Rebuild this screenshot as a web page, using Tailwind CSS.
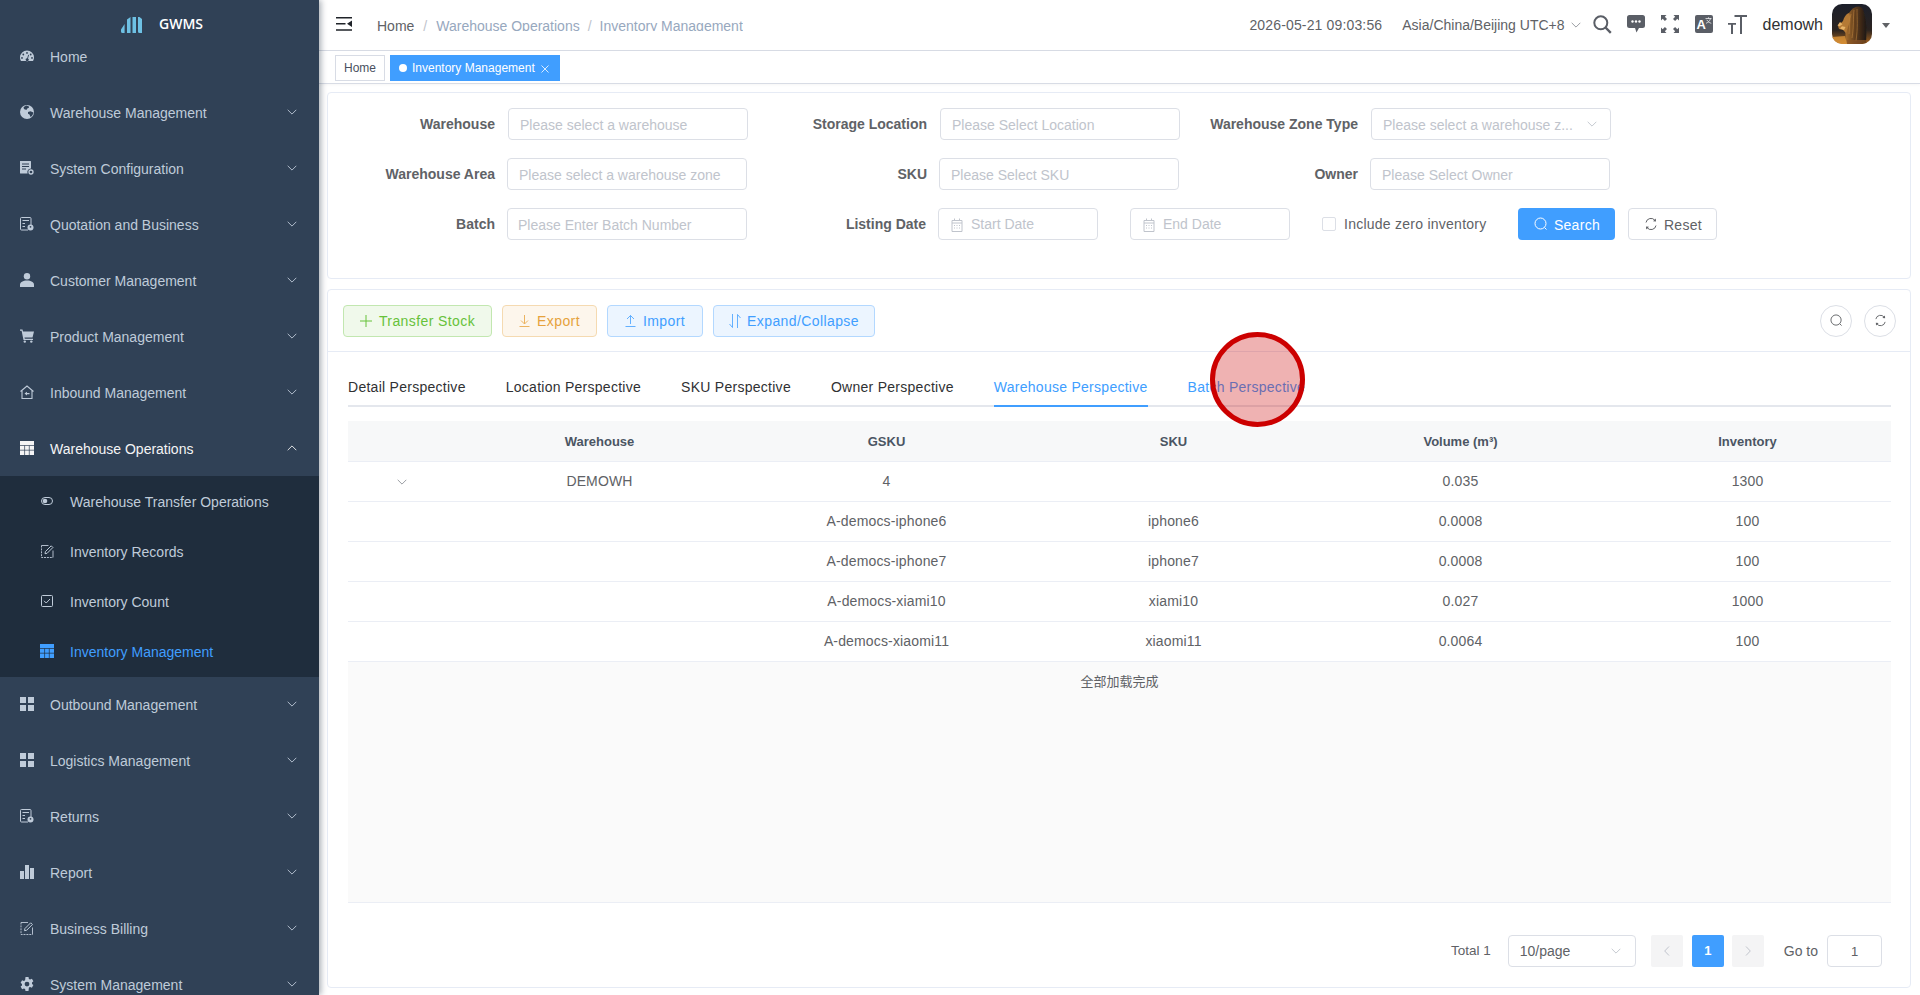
<!DOCTYPE html>
<html lang="en">
<head>
    <meta charset="UTF-8">
    <meta name="viewport" content="width=device-width, initial-scale=1.0">
    <title>GWMS - Inventory Management</title>
    <script src="https://cdn.jsdelivr.net/npm/@tailwindcss/browser@4"></script>
</head>
<body class="font-['Liberation_Sans','Noto_Sans_CJK_SC',sans-serif] bg-white">
    <!-- shared icons -->
    <svg class="hidden">
        <symbol id="i-dash" viewBox="0 0 14 14"><path fill="currentColor" fill-rule="evenodd" d="M7 1.500A7 7 0 0 0 0 8.300c0 1.700.5 3 1 3.700h12c.5-.7 1-2 1-3.700a7 7 0 0 0-7-6.800zM7 3a.9.9 0 1 1 0 1.800A.9.9 0 0 1 7 3zM3.300 4.600a.9.9 0 1 1 0 1.800.9.9 0 0 1 0-1.800zM10.700 4.600a.9.9 0 1 1 0 1.800.9.9 0 0 1 0-1.800zM2 8a.9.9 0 1 1 0 1.800A.9.9 0 0 1 2 8zM12 8a.9.9 0 1 1 0 1.800A.9.9 0 0 1 12 8zM8.200 5.800l.8.3-1 3.300a1.500 1.500 0 1 1-.8-.2z"/></symbol>
        <symbol id="i-globe" viewBox="0 0 14 14"><circle cx="7" cy="7" r="7" fill="currentColor"/><path fill="#304156" d="M6.500.6C5 1 3.800 1.900 3.500 3l1.200 1.500 2 .2.800-1.500 1.500-.5-.3-1.500zM8 7l2.500-.8 2.900 1.300c-.2 1.800-1.200 3.400-2.900 4.600L9.500 9.500 8 8.800z"/></symbol>
        <symbol id="i-config" viewBox="0 0 14 14"><path fill="currentColor" d="M0 0h10.500a.5.5 0 0 1 .5.5V7.500a3.600 3.600 0 0 0-3.400 5H.5a.5.5 0 0 1-.5-.5z"/><path stroke="#304156" stroke-width="1" d="M2 3h7M2 5.500h7M2 8h4"/><circle cx="11" cy="11" r="2" fill="none" stroke="currentColor" stroke-width="1.300"/></symbol>
        <symbol id="i-quote" viewBox="0 0 14 14"><path fill="none" stroke="currentColor" d="M8 13H1.500a1 1 0 0 1-1-1V1.500a1 1 0 0 1 1-1h8.500a1 1 0 0 1 1 1V8"/><path stroke="currentColor" d="M2.500 3.500h6.500M2.500 6.500h2.500M2.500 9.500h2.500"/><circle cx="10.500" cy="10.500" r="3" fill="currentColor"/><circle cx="10.500" cy="9.800" r=".9" fill="#304156"/></symbol>
        <symbol id="i-user" viewBox="0 0 14 14"><circle cx="7" cy="3.200" r="3.200" fill="currentColor"/><path fill="currentColor" d="M0 14v-2.500C0 9.300 3 7.500 7 7.500s7 1.800 7 4V14z"/></symbol>
        <symbol id="i-cart" viewBox="0 0 14 14"><path fill="currentColor" d="M0 .5h2.500L3 2.500h11l-1.500 6H4.500l.3 1.300h8.200v1.200H3.500L1.600 1.700H0z"/><circle cx="4.800" cy="12.600" r="1.200" fill="currentColor"/><circle cx="11.300" cy="12.600" r="1.200" fill="currentColor"/></symbol>
        <symbol id="i-inbound" viewBox="0 0 14 14"><path fill="none" stroke="currentColor" stroke-width="1.100" d="M.5 6.500 7 1l6.500 5.500M2 5.500v8h10v-8"/><path fill="currentColor" d="M4.500 8.500 7 6.800v1.200h2.500v1.200H7v1.200z"/></symbol>
        <symbol id="i-table" viewBox="0 0 14 14"><path fill="currentColor" d="M0 0h14v14H0z"/><path stroke="#304156" stroke-width=".7" d="M0 4.500h14M0 9.200h14M4.600 4.500V14M9.300 4.500V14"/></symbol>
        <symbol id="i-table-active" viewBox="0 0 14 14"><path fill="currentColor" d="M0 0h14v14H0z"/><path stroke="#1f2d3d" stroke-width=".7" d="M0 4.500h14M0 9.200h14M4.600 4.500V14M9.300 4.500V14"/></symbol>
        <symbol id="i-grid" viewBox="0 0 14 14"><path fill="currentColor" d="M0 0h6v6H0zM8 0h6v6H8zM0 8h6v6H0zM8 8h6v6H8z"/></symbol>
        <symbol id="i-bars" viewBox="0 0 14 14"><path fill="currentColor" d="M0 6h4v8H0zM5 0h4v14H5zM10 3h4v11h-4z"/></symbol>
        <symbol id="i-edit" viewBox="0 0 13 14"><path fill="none" stroke="currentColor" stroke-width=".9" stroke-dasharray="2 .9" d="M.5 1.500v12h11.500"/><path fill="none" stroke="currentColor" stroke-width=".9" d="M.5 1.500h7M12 6.500v7"/><path fill="none" stroke="currentColor" stroke-width="1" d="m4 9.700.4-2.100L10.200 1.800l1.700 1.700-5.800 5.800z"/></symbol>
        <symbol id="i-gear" viewBox="0 0 14 14"><path fill="currentColor" fill-rule="evenodd" d="M5.500 0h3l.4 1.900 1.200.6 1.800-.8 1.500 2.600-1.400 1.200v1.400l1.400 1.200-1.500 2.600-1.800-.8-1.200.7L8.500 14h-3l-.4-1.900-1.200-.7-1.800.8L.6 9.600 2 8.400V7L.6 5.800l1.500-2.600 1.800.8 1.200-.7zM7 4.700a2.400 2.400 0 1 0 0 4.800 2.400 2.400 0 0 0 0-4.800z"/></symbol>
        <symbol id="i-toggle" viewBox="0 0 12 8"><rect x=".5" y=".5" width="11" height="7" rx="3.500" fill="none" stroke="currentColor"/><circle cx="4" cy="4" r="2.300" fill="currentColor"/></symbol>
        <symbol id="i-check" viewBox="0 0 12 12"><rect x=".5" y=".5" width="11" height="11" rx="1" fill="none" stroke="currentColor"/><path fill="none" stroke="currentColor" d="m3 5.800 2.200 2.200L9 4"/></symbol>
        <symbol id="i-down" viewBox="0 0 10 6"><path fill="none" stroke="currentColor" stroke-width=".9" d="m.7.8 4.300 4.300L9.300.8"/></symbol>
        <symbol id="i-cal" viewBox="0 0 12 14"><path fill="none" stroke="currentColor" d="M1 2.500h10v11H1zM1 5h10"/><path stroke="currentColor" d="M3.500.5v2M8.500.5v2M3 7.500h1M5.500 7.500h1M8 7.500h1M3 10h1M5.500 10h1M8 10h1"/></symbol>
        <symbol id="i-search" viewBox="0 0 14 14"><circle cx="6.500" cy="6.500" r="5.500" fill="none" stroke="currentColor"/><path stroke="currentColor" d="m10.500 10.500 2 2"/></symbol>
        <symbol id="i-refresh" viewBox="0 0 14 14"><path fill="none" stroke="currentColor" d="M2 5.500A5 5 0 0 1 11 3.500M12 8.500A5 5 0 0 1 3 10.500"/><path fill="currentColor" d="m11.800 1.500.2 3-3-.3zM2.200 12.500l-.2-3 3 .3z"/></symbol>
    </svg>

    <div class="relative flex h-[995px] w-[1920px] overflow-hidden">
        <!-- Sidebar -->
        <aside class="z-10 flex h-full w-[319px] shrink-0 flex-col overflow-hidden bg-[#304156] text-[14px] text-[#bfcbd9] shadow-[2px_0_6px_rgba(0,21,41,0.35)]">
            <div class="flex h-[29px] shrink-0 items-start pl-[121px] pt-[17px]">
                <svg class="h-[16px] w-[21px]" viewBox="0 0 21 16" fill="#6ec1e4"><path d="M0 12.500 3.600 7v9H1.500A1.500 1.500 0 0 1 0 14.500zM6 2.500 9.500 0v16H6zM11.500 0H15v16h-3.500zM17 0h1.500L21 2v14h-2.500a1.500 1.500 0 0 1-1.500-1.500z"/></svg>
                <span class="ml-[17px] -mt-[1px] font-['Open_Sans',sans-serif] text-[14px] leading-[16px] font-semibold text-white">GWMS</span>
            </div>
            <a class="flex h-[56px] shrink-0 items-center pl-[20px]"><svg class="h-[14px] w-[14px] -mt-[3px]"><use href="#i-dash"/></svg><span class="ml-[16px]">Home</span></a>
            <a class="flex h-[56px] shrink-0 items-center pl-[20px]"><svg class="h-[14px] w-[14px] -mt-[3px]"><use href="#i-globe"/></svg><span class="ml-[16px] flex-1">Warehouse Management</span><svg class="mr-[22px] h-[6px] w-[10px] -mt-[3px]"><use href="#i-down"/></svg></a>
            <a class="flex h-[56px] shrink-0 items-center pl-[20px]"><svg class="h-[14px] w-[14px] -mt-[3px]"><use href="#i-config"/></svg><span class="ml-[16px] flex-1">System Configuration</span><svg class="mr-[22px] h-[6px] w-[10px] -mt-[3px]"><use href="#i-down"/></svg></a>
            <a class="flex h-[56px] shrink-0 items-center pl-[20px]"><svg class="h-[14px] w-[14px] -mt-[3px]"><use href="#i-quote"/></svg><span class="ml-[16px] flex-1">Quotation and Business</span><svg class="mr-[22px] h-[6px] w-[10px] -mt-[3px]"><use href="#i-down"/></svg></a>
            <a class="flex h-[56px] shrink-0 items-center pl-[20px]"><svg class="h-[14px] w-[14px] -mt-[3px]"><use href="#i-user"/></svg><span class="ml-[16px] flex-1">Customer Management</span><svg class="mr-[22px] h-[6px] w-[10px] -mt-[3px]"><use href="#i-down"/></svg></a>
            <a class="flex h-[56px] shrink-0 items-center pl-[20px]"><svg class="h-[14px] w-[14px] -mt-[3px]"><use href="#i-cart"/></svg><span class="ml-[16px] flex-1">Product Management</span><svg class="mr-[22px] h-[6px] w-[10px] -mt-[3px]"><use href="#i-down"/></svg></a>
            <a class="flex h-[56px] shrink-0 items-center pl-[20px]"><svg class="h-[14px] w-[14px] -mt-[3px]"><use href="#i-inbound"/></svg><span class="ml-[16px] flex-1">Inbound Management</span><svg class="mr-[22px] h-[6px] w-[10px] -mt-[3px]"><use href="#i-down"/></svg></a>
            <a class="flex h-[56px] shrink-0 items-center pl-[20px] text-[#f4f4f5]"><svg class="h-[14px] w-[14px] -mt-[3px]"><use href="#i-table"/></svg><span class="ml-[16px] flex-1">Warehouse Operations</span><svg class="mr-[22px] h-[6px] w-[10px] -mt-[3px] rotate-180"><use href="#i-down"/></svg></a>
            <!-- Warehouse Operations submenu -->
            <div class="-mt-[1px] shrink-0 bg-[#1f2d3d] pt-[1px]">
                <a class="flex h-[50px] items-center pl-[41px]"><svg class="h-[8px] w-[12px] -mt-[3px]"><use href="#i-toggle"/></svg><span class="ml-[17px]">Warehouse Transfer Operations</span></a>
                <a class="flex h-[50px] items-center pl-[41px]"><svg class="h-[14px] w-[13px] -mt-[3px]"><use href="#i-edit"/></svg><span class="ml-[16px]">Inventory Records</span></a>
                <a class="flex h-[50px] items-center pl-[41px]"><svg class="h-[12px] w-[12px] -mt-[3px]"><use href="#i-check"/></svg><span class="ml-[17px]">Inventory Count</span></a>
                <a class="flex h-[50px] items-center pl-[40px] text-[#409eff]"><svg class="h-[14px] w-[14px] -mt-[3px]"><use href="#i-table-active"/></svg><span class="ml-[16px]">Inventory Management</span></a>
            </div>
            <a class="flex h-[56px] shrink-0 items-center pl-[20px]"><svg class="h-[14px] w-[14px] -mt-[3px]"><use href="#i-grid"/></svg><span class="ml-[16px] flex-1">Outbound Management</span><svg class="mr-[22px] h-[6px] w-[10px] -mt-[3px]"><use href="#i-down"/></svg></a>
            <a class="flex h-[56px] shrink-0 items-center pl-[20px]"><svg class="h-[14px] w-[14px] -mt-[3px]"><use href="#i-grid"/></svg><span class="ml-[16px] flex-1">Logistics Management</span><svg class="mr-[22px] h-[6px] w-[10px] -mt-[3px]"><use href="#i-down"/></svg></a>
            <a class="flex h-[56px] shrink-0 items-center pl-[20px]"><svg class="h-[14px] w-[14px] -mt-[3px]"><use href="#i-quote"/></svg><span class="ml-[16px] flex-1">Returns</span><svg class="mr-[22px] h-[6px] w-[10px] -mt-[3px]"><use href="#i-down"/></svg></a>
            <a class="flex h-[56px] shrink-0 items-center pl-[20px]"><svg class="h-[14px] w-[14px] -mt-[3px]"><use href="#i-bars"/></svg><span class="ml-[16px] flex-1">Report</span><svg class="mr-[22px] h-[6px] w-[10px] -mt-[3px]"><use href="#i-down"/></svg></a>
            <a class="flex h-[56px] shrink-0 items-center pl-[20px]"><svg class="h-[14px] w-[14px] -mt-[3px]"><use href="#i-edit"/></svg><span class="ml-[16px] flex-1">Business Billing</span><svg class="mr-[22px] h-[6px] w-[10px] -mt-[3px]"><use href="#i-down"/></svg></a>
            <a class="flex h-[56px] shrink-0 items-center pl-[20px]"><svg class="h-[14px] w-[14px] -mt-[3px]"><use href="#i-gear"/></svg><span class="ml-[16px] flex-1">System Management</span><svg class="mr-[22px] h-[6px] w-[10px] -mt-[3px]"><use href="#i-down"/></svg></a>
        </aside>

        <!-- Main -->
        <main class="flex min-w-0 flex-1 flex-col">
            <!-- Top bar -->
            <header class="flex h-[51px] shrink-0 items-center border-b border-[#d8dce5] pl-[17px] pr-[30px] text-[14px] text-[#606266]">
                <svg class="h-[14px] w-[16px] shrink-0 -mt-[2px]" viewBox="0 0 16 14" fill="#1f2329"><path d="M0 0h16v1.600H0zM0 6h9.500v1.600H0zM0 12.200h16v1.600H0zM11 6.800l5-3.300v6.600z"/></svg>
                <div class="ml-[25px] mt-[14px] flex h-[17px] self-start overflow-hidden leading-[24px]">
                    <span class="text-[#606266]">Home</span>
                    <span class="mx-[9px] text-[#c0c4cc]">/</span>
                    <span class="text-[#97a8be]">Warehouse Operations</span>
                    <span class="mx-[8px] text-[#c0c4cc]">/</span>
                    <span class="text-[#97a8be]">Inventory Management</span>
                </div>
                <span class="ml-auto tracking-[0.15px]">2026-05-21 09:03:56</span>
                <span class="ml-[20px]">Asia/China/Beijing UTC+8</span>
                <svg class="ml-[6px] h-[6px] w-[10px] text-[#909399]"><use href="#i-down"/></svg>
                <svg class="ml-[12px] h-[19px] w-[19px] -mt-[2px]" viewBox="0 0 19 19" fill="none" stroke="#5a5e66"><circle cx="7.800" cy="7.800" r="6.500" stroke-width="2"/><path stroke-width="2.400" d="m12.500 12.500 5.300 5.300"/></svg>
                <svg class="ml-[15px] h-[18px] w-[18px] -mt-[2px]" viewBox="0 0 18 18"><path fill="#5a5e66" d="M2.500 0h13A2.500 2.500 0 0 1 18 2.500v8a2.500 2.500 0 0 1-2.500 2.500H12l-2.500 4.500L8 13H2.500A2.500 2.500 0 0 1 0 10.500v-8A2.500 2.500 0 0 1 2.500 0z"/><circle cx="5.500" cy="6.500" r="1.200" fill="#fff"/><circle cx="9" cy="6.500" r="1.200" fill="#fff"/><circle cx="12.500" cy="6.500" r="1.200" fill="#fff"/></svg>
                <svg class="ml-[16px] h-[18px] w-[18px] -mt-[2px]" viewBox="0 0 18 18" fill="#5a5e66"><path d="M0 0h5.500L3.800 1.700 6 3.900 3.900 6 1.700 3.800 0 5.500zM18 0v5.500l-1.700-1.700L14.100 6 12 3.900l2.200-2.200L12.500 0zM0 18v-5.500l1.700 1.700L3.900 12 6 14.100l-2.200 2.200L5.500 18zM18 18h-5.500l1.700-1.700L12 14.100l2.100-2.100 2.200 2.200 1.700-1.700z"/></svg>
                <span class="relative ml-[16px] flex h-[18px] w-[18px] -mt-[2px] items-end rounded-[2px] bg-[#5a5e66] pl-[2px] text-[13px] leading-[16px] font-bold text-white">A<svg class="absolute right-[1px] top-[1.500px] h-[7px] w-[7px]" viewBox="0 0 7 7" fill="none" stroke="#fff" stroke-width=".7"><path d="M.5 1.500h6M3.500.3v1.200M5.500 1.500C5 4 3 5.500 1 6.300M1.800 2.800c.8 1.700 2.500 3 4.500 3.500"/></svg></span>
                <svg class="ml-[15px] h-[19px] w-[19px] -mt-[2px]" viewBox="0 0 19 19" fill="#5a5e66"><path d="M6.500 0H19v2h-5v17h-2V2H6.500zM0 8h8v1.800H5V19H3V9.800H0z"/></svg>
                <span class="ml-[16px] -mt-[1px] text-[16px] text-[#303133]">demowh</span>
                <!-- avatar: lion portrait -->
                <svg class="ml-[9px] h-[40px] w-[40px] -mt-[2px] shrink-0 rounded-[10px]" viewBox="0 0 40 40">
                    <defs>
                        <linearGradient id="av-bg" x1="0" y1="0" x2="0" y2="1"><stop offset="0" stop-color="#1c1f2a"/><stop offset=".65" stop-color="#2a2320"/><stop offset="1" stop-color="#a8651f"/></linearGradient>
                        <linearGradient id="av-mane" x1="0" y1="0" x2="1" y2="0"><stop offset="0" stop-color="#a9702f"/><stop offset=".5" stop-color="#5b3a1c"/><stop offset="1" stop-color="#1e1714"/></linearGradient>
                        <filter id="av-blur"><feGaussianBlur stdDeviation=".7"/></filter>
                    </defs>
                    <rect width="40" height="40" fill="url(#av-bg)"/>
                    <g filter="url(#av-blur)">
                        <path fill="url(#av-mane)" d="M14 40C13 28 13 16 17 9 21 3 26 1 30 4c4 6 5 20 4 36z"/>
                        <path fill="#b57a35" d="M17 9c-3 1-5 4-6 8l-5 5 1 3 4 1 3 3 2-6c2-5 3-10 1-14z"/>
                        <path fill="#e8b468" d="M8 18 5.500 21.500l2 .8 3-2zM8 24.500l4 1.500 1.500-3-3.500-.8z"/>
                        <path fill="none" stroke="#c98d42" stroke-width=".5" d="M19 10c-2 6-1 12-2 20M22 6c-1 8 0 16-2 28M25 5c0 10 1 18-1 32"/>
                        <path fill="#e39a3a" d="M0 33l13-1 2 8H0z" opacity=".75"/>
                        <path fill="#8a5424" d="M15 36h20v4H15z" opacity=".7"/>
                    </g>
                </svg>
                <svg class="ml-[10px] h-[5px] w-[8px]" viewBox="0 0 8 5" fill="#606266"><path d="M0 0h8L4 5z"/></svg>
            </header>

            <!-- Tags -->
            <div class="flex h-[33px] shrink-0 gap-[5px] border-b border-[#d8dce5] pl-[16px] pt-[4px] text-[12px] shadow-[0_1px_3px_rgba(0,0,0,0.04)]">
                <span class="flex h-[26px] w-[50px] items-center justify-center border border-[#d8dce5] text-[#495060]">Home</span>
                <span class="flex h-[26px] w-[170px] items-center bg-[#409eff] pl-[9px] text-white">
                    <span class="h-[8px] w-[8px] rounded-full bg-white"></span>
                    <span class="ml-[5px]">Inventory Management</span>
                    <svg class="ml-[6px] mt-[1px] h-[8px] w-[8px]" viewBox="0 0 8 8" stroke="#fff" stroke-width=".8"><path d="m.5.5 7 7M7.500.5l-7 7"/></svg>
                </span>
            </div>

            <div class="flex min-h-0 flex-1 flex-col pl-[8px] pr-[9px] pt-[8px]">
                <!-- Filter card -->
                <section class="flex h-[187px] shrink-0 flex-col gap-[18px] rounded-[4px] border border-[#e6ebf5] pt-[15px] text-[14px]">
                    <div class="flex h-[32px] items-center">
                        <label class="w-[167px] shrink-0 text-right font-bold text-[#606266]">Warehouse</label>
                        <input class="ml-[13px] h-[32px] w-[240px] rounded-[4px] border border-[#dcdfe6] px-[11px] pt-[2px] placeholder:text-[#c0c4cc]" placeholder="Please select a warehouse">
                        <label class="w-[179px] shrink-0 text-right font-bold text-[#606266]">Storage Location</label>
                        <input class="ml-[13px] h-[32px] w-[240px] rounded-[4px] border border-[#dcdfe6] px-[11px] pt-[2px] placeholder:text-[#c0c4cc]" placeholder="Please Select Location">
                        <label class="w-[178px] shrink-0 text-right font-bold text-[#606266]">Warehouse Zone Type</label>
                        <div class="relative ml-[13px] h-[32px] w-[240px]">
                            <input class="h-[32px] w-full rounded-[4px] border border-[#dcdfe6] pl-[11px] pr-[30px] pt-[2px] placeholder:text-[#c0c4cc]" placeholder="Please select a warehouse z...">
                            <svg class="absolute right-[14px] top-[13px] h-[6px] w-[10px] text-[#c0c4cc]"><use href="#i-down"/></svg>
                        </div>
                    </div>
                    <div class="flex h-[32px] items-center">
                        <label class="w-[167px] shrink-0 text-right font-bold text-[#606266]">Warehouse Area</label>
                        <input class="ml-[12px] h-[32px] w-[240px] rounded-[4px] border border-[#dcdfe6] px-[11px] pt-[2px] placeholder:text-[#c0c4cc]" placeholder="Please select a warehouse zone">
                        <label class="w-[180px] shrink-0 text-right font-bold text-[#606266]">SKU</label>
                        <input class="ml-[12px] h-[32px] w-[240px] rounded-[4px] border border-[#dcdfe6] px-[11px] pt-[2px] placeholder:text-[#c0c4cc]" placeholder="Please Select SKU">
                        <label class="w-[179px] shrink-0 text-right font-bold text-[#606266]">Owner</label>
                        <input class="ml-[12px] h-[32px] w-[240px] rounded-[4px] border border-[#dcdfe6] px-[11px] pt-[2px] placeholder:text-[#c0c4cc]" placeholder="Please Select Owner">
                    </div>
                    <div class="flex h-[32px] items-center">
                        <label class="w-[167px] shrink-0 text-right font-bold text-[#606266]">Batch</label>
                        <input class="ml-[12px] h-[32px] w-[240px] rounded-[4px] border border-[#dcdfe6] pl-[10px] pr-[11px] pt-[2px] placeholder:text-[#c0c4cc]" placeholder="Please Enter Batch Number">
                        <label class="w-[179px] shrink-0 text-right font-bold text-[#606266]">Listing Date</label>
                        <div class="ml-[12px] flex h-[32px] w-[160px] items-center rounded-[4px] border border-[#dcdfe6] pl-[12px] pt-[1px] text-[#c0c4cc]">
                            <svg class="h-[14px] w-[12px]"><use href="#i-cal"/></svg><span class="ml-[8px]">Start Date</span>
                        </div>
                        <div class="ml-[32px] flex h-[32px] w-[160px] items-center rounded-[4px] border border-[#dcdfe6] pl-[12px] pt-[1px] text-[#c0c4cc]">
                            <svg class="h-[14px] w-[12px]"><use href="#i-cal"/></svg><span class="ml-[8px]">End Date</span>
                        </div>
                        <span class="ml-[32px] h-[14px] w-[14px] rounded-[2px] border border-[#dcdfe6]"></span>
                        <span class="ml-[8px] tracking-[0.25px] text-[#606266]">Include zero inventory</span>
                        <button class="ml-[32px] flex h-[32px] w-[97px] items-center justify-center rounded-[4px] bg-[#409eff] pt-[2px] tracking-[0.3px] text-white">
                            <svg class="-mt-[2px] h-[14px] w-[14px]"><use href="#i-search"/></svg><span class="ml-[6px]">Search</span>
                        </button>
                        <button class="ml-[13px] flex h-[32px] w-[89px] items-center justify-center rounded-[4px] border border-[#dcdfe6] pt-[2px] tracking-[0.3px] text-[#606266]">
                            <svg class="-mt-[2px] h-[14px] w-[14px]"><use href="#i-refresh"/></svg><span class="ml-[6px]">Reset</span>
                        </button>
                    </div>
                </section>

                <!-- Data card -->
                <section class="mt-[10px] flex h-[699px] shrink-0 flex-col rounded-[4px] border border-[#e6ebf5] text-[14px]">
                    <div class="flex h-[62px] shrink-0 items-center border-b border-[#e6ebf5] pl-[15px] pr-[14px] tracking-[0.4px]">
                        <button class="flex h-[32px] w-[149px] items-center justify-center rounded-[4px] border border-[#c2e7b0] bg-[#f0f9eb] pt-[2px] text-[#67c23a]">
                            <svg class="-mt-[2px] h-[12px] w-[12px]" viewBox="0 0 12 12" stroke="currentColor" stroke-width="1"><path d="M6 0v12M0 6h12"/></svg><span class="ml-[7px]">Transfer Stock</span>
                        </button>
                        <button class="ml-[10px] flex h-[32px] w-[95px] items-center justify-center rounded-[4px] border border-[#f5dab1] bg-[#fdf6ec] pt-[2px] text-[#e6a23c]">
                            <svg class="-mt-[2px] h-[12px] w-[11px]" viewBox="0 0 11 12" fill="none" stroke="currentColor" stroke-width=".8"><path d="M.5 11.500h10M5.500 0v8.500M2 5.500l3.500 3.500L9 5.500"/></svg><span class="ml-[7px]">Export</span>
                        </button>
                        <button class="ml-[10px] flex h-[32px] w-[96px] items-center justify-center rounded-[4px] border border-[#b3d8ff] bg-[#ecf5ff] pt-[2px] text-[#409eff]">
                            <svg class="-mt-[2px] h-[12px] w-[11px]" viewBox="0 0 11 12" fill="none" stroke="currentColor" stroke-width=".8"><path d="M.5 11.500h10M5.500 9V.5M2 4l3.500-3.500L9 4"/></svg><span class="ml-[7px]">Import</span>
                        </button>
                        <button class="ml-[10px] flex h-[32px] w-[162px] items-center justify-center rounded-[4px] border border-[#b3d8ff] bg-[#ecf5ff] pt-[2px] text-[#409eff]">
                            <svg class="-mt-[2px] h-[14px] w-[12px]" viewBox="0 0 12 14" fill="none" stroke="currentColor" stroke-width=".8"><path d="M3.500 0v13.500L.5 10M8.500 14V.5l3 3.500"/></svg><span class="ml-[6px]">Expand/Collapse</span>
                        </button>
                        <button class="ml-auto flex h-[32px] w-[32px] items-center justify-center rounded-full border border-[#dcdfe6] text-[#606266]">
                            <svg class="h-[13px] w-[13px]"><use href="#i-search"/></svg>
                        </button>
                        <button class="ml-[12px] flex h-[32px] w-[32px] items-center justify-center rounded-full border border-[#dcdfe6] text-[#606266]">
                            <svg class="h-[13px] w-[13px]"><use href="#i-refresh"/></svg>
                        </button>
                    </div>

                    <div class="flex min-h-0 flex-1 flex-col pl-[20px] pr-[19px] pt-[15px]">
                        <!-- Tabs -->
                        <div class="flex h-[40px] shrink-0 gap-[40px] border-b-2 border-[#e4e7ed] tracking-[0.27px] text-[#303133]">
                            <span class="h-[40px] leading-[40px]">Detail Perspective</span>
                            <span class="h-[40px] leading-[40px]">Location Perspective</span>
                            <span class="h-[40px] leading-[40px]">SKU Perspective</span>
                            <span class="h-[40px] leading-[40px]">Owner Perspective</span>
                            <span class="h-[40px] border-b-2 border-[#409eff] leading-[40px] text-[#409eff]">Warehouse Perspective</span>
                            <span class="h-[40px] leading-[40px] text-[#409eff]">Batch Perspective</span>
                        </div>

                        <!-- Table -->
                        <table class="mt-[14px] w-full shrink-0 table-fixed text-center text-[14px] text-[#606266]">
                            <colgroup>
                                <col class="w-[108px]"><col><col><col><col><col>
                            </colgroup>
                            <thead class="bg-[#f7f8f9] text-[13px] font-bold text-[#4b5563]">
                                <tr class="h-[40px] border-b border-[#ebeef5]">
                                    <th></th>
                                    <th class="pt-[1px]">Warehouse</th>
                                    <th class="pt-[1px]">GSKU</th>
                                    <th class="pt-[1px]">SKU</th>
                                    <th class="pt-[1px]">Volume (m³)</th>
                                    <th class="pt-[1px]">Inventory</th>
                                </tr>
                            </thead>
                            <tbody class="tracking-[0.15px] [&_td]:pt-[1px]">
                                <tr class="h-[40px] border-b border-[#ebeef5]">
                                    <td><svg class="mx-auto h-[6px] w-[10px] text-[#909399]"><use href="#i-down"/></svg></td>
                                    <td>DEMOWH</td><td>4</td><td></td><td>0.035</td><td>1300</td>
                                </tr>
                                <tr class="h-[40px] border-b border-[#ebeef5]">
                                    <td></td><td></td><td>A-democs-iphone6</td><td>iphone6</td><td>0.0008</td><td>100</td>
                                </tr>
                                <tr class="h-[40px] border-b border-[#ebeef5]">
                                    <td></td><td></td><td>A-democs-iphone7</td><td>iphone7</td><td>0.0008</td><td>100</td>
                                </tr>
                                <tr class="h-[40px] border-b border-[#ebeef5]">
                                    <td></td><td></td><td>A-democs-xiami10</td><td>xiami10</td><td>0.027</td><td>1000</td>
                                </tr>
                                <tr class="h-[40px] border-b border-[#ebeef5]">
                                    <td></td><td></td><td>A-democs-xiaomi11</td><td>xiaomi11</td><td>0.0064</td><td>100</td>
                                </tr>
                            </tbody>
                        </table>
                        <div class="h-[241px] shrink-0 border-b border-[#ebeef5] bg-[#fafafa] text-center text-[13px] leading-[40px] text-[#606266]">全部加载完成</div>

                        <!-- Pagination -->
                        <div class="mt-[32px] flex h-[32px] shrink-0 items-center justify-end pr-[9px] text-[13px] text-[#606266]">
                            <span class="pt-[2px] text-[13.500px]">Total 1</span>
                            <div class="ml-[17px] flex h-[32px] w-[128px] items-center justify-between rounded-[4px] border border-[#dcdfe6] pl-[11px] pr-[14px]">
                                <span class="pt-[2px] text-[14px]">10/page</span>
                                <svg class="h-[6px] w-[10px] text-[#c0c4cc]"><use href="#i-down"/></svg>
                            </div>
                            <span class="ml-[15px] flex h-[32px] w-[32px] items-center justify-center rounded-[2px] bg-[#f4f4f5] text-[#c0c4cc]"><svg class="h-[10px] w-[6px]" viewBox="0 0 6 10" fill="none" stroke="currentColor"><path d="M5 .5.7 5 5 9.500"/></svg></span>
                            <span class="ml-[9px] flex h-[32px] w-[32px] items-center justify-center rounded-[2px] bg-[#409eff] font-bold text-white">1</span>
                            <span class="ml-[8px] flex h-[32px] w-[32px] items-center justify-center rounded-[2px] bg-[#f4f4f5] text-[#c0c4cc]"><svg class="h-[10px] w-[6px]" viewBox="0 0 6 10" fill="none" stroke="currentColor"><path d="m1 .5L5.300 5 1 9.500"/></svg></span>
                            <span class="ml-[20px] pt-[2px] text-[14px]">Go to</span>
                            <input class="ml-[9px] h-[32px] w-[55px] rounded-[4px] border border-[#dcdfe6] pt-[2px] text-center" value="1">
                        </div>
                    </div>
                </section>
            </div>
        </main>

        <!-- click marker over the page -->
        <div class="pointer-events-none absolute left-[1210px] top-[332px] z-20 h-[95px] w-[95px] rounded-full border-[5px] border-[#cc0000] bg-[#cc0000]/30"></div>
    </div>
</body>
</html>
